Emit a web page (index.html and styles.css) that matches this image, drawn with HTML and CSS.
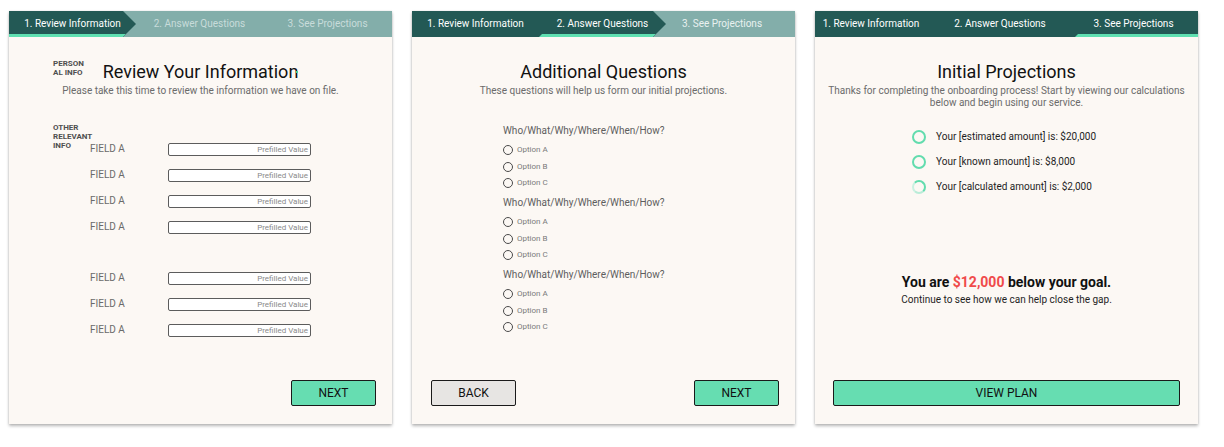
FILE: index.html
```html
<!DOCTYPE html>
<html lang="en">
<head>
<meta charset="utf-8">
<title>Onboarding</title>
<link rel="stylesheet" href="styles.css">
</head>
<body>
<div class="screens">

  <section class="panel">
    <nav class="tabs">
      <div class="tab current first">1. Review Information</div>
      <div class="tab todo dim">2. Answer Questions</div>
      <div class="tab todo dim">3. See Projections</div>
    </nav>
    <div class="panel-body">
      <header class="review-head">
        <div class="side-label">PERSON<br>AL INFO</div>
        <h1 class="title">Review Your Information<span class="cursor-dot"></span></h1>
        <div></div>
      </header>
      <p class="subtitle">Please take this time to review the information we have on file.</p>
      <div class="fields">
        <div class="side-label">OTHER<br>RELEVANT<br>INFO</div>
        <div class="field-groups">
          <div class="field-group">
            <div class="field-row"><span class="field-name">FIELD A</span><div class="field-input">Prefilled Value</div></div>
            <div class="field-row"><span class="field-name">FIELD A</span><div class="field-input">Prefilled Value</div></div>
            <div class="field-row"><span class="field-name">FIELD A</span><div class="field-input">Prefilled Value</div></div>
            <div class="field-row"><span class="field-name">FIELD A</span><div class="field-input">Prefilled Value</div></div>
          </div>
          <div class="field-group">
            <div class="field-row"><span class="field-name">FIELD A</span><div class="field-input">Prefilled Value</div></div>
            <div class="field-row"><span class="field-name">FIELD A</span><div class="field-input">Prefilled Value</div></div>
            <div class="field-row"><span class="field-name">FIELD A</span><div class="field-input">Prefilled Value</div></div>
          </div>
        </div>
      </div>
      <div class="actions actions-end">
        <button class="btn btn-primary">NEXT</button>
      </div>
    </div>
  </section>

  <section class="panel">
    <nav class="tabs">
      <div class="tab done">1. Review Information</div>
      <div class="tab current">2. Answer Questions</div>
      <div class="tab todo p2-tab3">3. See Projections</div>
    </nav>
    <div class="panel-body">
      <h1 class="title">Additional Questions</h1>
      <p class="subtitle">These questions will help us form our initial projections.</p>
      <div class="questions">
        <div class="question">
          <p class="question-text">Who/What/Why/Where/When/How?</p>
          <div class="options">
            <label class="option"><span class="radio"></span>Option A</label>
            <label class="option"><span class="radio"></span>Option B</label>
            <label class="option"><span class="radio"></span>Option C</label>
          </div>
        </div>
        <div class="question">
          <p class="question-text">Who/What/Why/Where/When/How?</p>
          <div class="options">
            <label class="option"><span class="radio"></span>Option A</label>
            <label class="option"><span class="radio"></span>Option B</label>
            <label class="option"><span class="radio"></span>Option C</label>
          </div>
        </div>
        <div class="question">
          <p class="question-text">Who/What/Why/Where/When/How?</p>
          <div class="options">
            <label class="option"><span class="radio"></span>Option A</label>
            <label class="option"><span class="radio"></span>Option B</label>
            <label class="option"><span class="radio"></span>Option C</label>
          </div>
        </div>
      </div>
      <div class="actions actions-between">
        <button class="btn btn-secondary">BACK</button>
        <button class="btn btn-primary">NEXT</button>
      </div>
    </div>
  </section>

  <section class="panel">
    <nav class="tabs">
      <div class="tab done p3-tab1">1. Review Information</div>
      <div class="tab done p3-tab2">2. Answer Questions</div>
      <div class="tab current last">3. See Projections</div>
    </nav>
    <div class="panel-body">
      <h1 class="title">Initial Projections</h1>
      <p class="subtitle">Thanks for completing the onboarding process! Start by viewing our calculations<br>below and begin using our service.</p>
      <ul class="results">
        <li class="result"><span class="ring"></span>Your [estimated amount] is: $20,000</li>
        <li class="result"><span class="ring"></span>Your [known amount] is: $8,000</li>
        <li class="result"><span class="ring ring-loading"></span>Your [calculated amount] is: $2,000</li>
      </ul>
      <p class="goal">You are <span class="goal-gap">$12,000</span> below your goal.</p>
      <p class="goal-note">Continue to see how we can help close the gap.</p>
      <div class="actions actions-full">
        <button class="btn btn-primary btn-block">VIEW PLAN</button>
      </div>
    </div>
  </section>

</div>
</body>
</html>
```
FILE: styles.css
```css
* { box-sizing: border-box; }

html, body {
  margin: 0;
  padding: 0;
  background: #ffffff;
  font-family: Roboto, "Liberation Sans", Arial, sans-serif;
}

.screens {
  display: flex;
  gap: 20px;
  padding: 11px 0 23px 9px;
}

.panel {
  width: 383px;
  height: 413px;
  background: #fcf8f4;
  box-shadow: 0 2px 3px rgba(0, 0, 0, 0.28), 0 0 2px rgba(0, 0, 0, 0.10);
  display: flex;
  flex-direction: column;
}

/* ---------- step tabs ---------- */
.tabs {
  display: grid;
  grid-template-columns: 127px 127px 1fr;
  height: 26px;
  background: #83aeaa;
}

.tab {
  position: relative;
  display: flex;
  align-items: center;
  justify-content: center;
  font-size: 10px;
  line-height: 12px;
  color: #ffffff;
  white-space: nowrap;
}

.tab.todo { color: #e9f1f0; }
.tab.todo.dim { color: #c8dcda; }

.tab.done { background: #235955; }

.tab.current {
  background: #235955;
  clip-path: polygon(0 0, calc(100% - 13px) 0, 100% 50%, calc(100% - 13px) 100%, 0 100%);
}

.tab.current.last { clip-path: none; }

.tab.current::after {
  content: "";
  position: absolute;
  left: 0;
  right: 0;
  bottom: 0;
  height: 3px;
  background: #5fe0b1;
  clip-path: polygon(3px 0, calc(100% - 10px) 0, calc(100% - 13px) 100%, 0 100%);
}

.tab.current.first::after {
  clip-path: polygon(0 0, calc(100% - 10px) 0, calc(100% - 13px) 100%, 0 100%);
}

.tab.current.last::after {
  left: 6px;
  clip-path: polygon(3px 0, 100% 0, 100% 100%, 0 100%);
}

.p2-tab3 { padding-right: 17px; }
.p3-tab1 { padding-right: 15px; }
.p3-tab2 { padding-right: 11px; }

/* ---------- body ---------- */
.panel-body {
  flex: 1;
  display: flex;
  flex-direction: column;
  padding-top: 24px;
}

.title {
  margin: 0;
  font-size: 18px;
  line-height: 22px;
  font-weight: 400;
  color: #121212;
  text-align: center;
}

.cursor-dot {
  display: inline-block;
  width: 2px;
  height: 2px;
  margin-left: -2px;
  vertical-align: 5px;
  background: #3fcf9c;
}

.subtitle {
  margin: 2px 0 0;
  font-size: 10px;
  line-height: 12px;
  color: #6b6b6b;
  text-align: center;
}

.review-head {
  display: grid;
  grid-template-columns: 1fr auto 1fr;
  padding: 0 44px;
}

.side-label {
  font-size: 8px;
  line-height: 9px;
  font-weight: 700;
  color: #4f4f4f;
}

.review-head .side-label { margin-top: -2px; }

/* ---------- fields ---------- */
.fields {
  display: flex;
  margin-top: 26px;
  padding-left: 44px;
}

.fields .side-label { width: 37px; }

.field-groups {
  display: flex;
  flex-direction: column;
  gap: 38px;
  padding-top: 20px;
}

.field-group {
  display: flex;
  flex-direction: column;
  gap: 13px;
}

.field-row {
  display: flex;
  align-items: flex-start;
  height: 13px;
}

.field-name {
  width: 78px;
  font-size: 10px;
  line-height: 12px;
  color: #6a6a6a;
}

.field-input {
  width: 143px;
  height: 13px;
  border: 1px solid #5c5c5c;
  border-radius: 2px;
  background: #ffffff;
  font-size: 8px;
  line-height: 11px;
  color: #8a8a8a;
  text-align: right;
  padding-right: 2px;
}

/* ---------- questions ---------- */
.questions {
  margin-top: 27.5px;
  padding-left: 91px;
  display: flex;
  flex-direction: column;
  gap: 8.5px;
}

.question-text {
  margin: 0 0 8.5px;
  font-size: 10px;
  line-height: 12px;
  color: #5e5e5e;
}

.options {
  display: flex;
  flex-direction: column;
  gap: 6.5px;
}

.option {
  display: flex;
  align-items: center;
  height: 10px;
  font-size: 8px;
  line-height: 10px;
  color: #7a7a7a;
}

.radio {
  width: 10px;
  height: 10px;
  border: 1px solid #4a4a4a;
  border-radius: 50%;
  margin-right: 4px;
  flex: none;
}

/* ---------- results ---------- */
.results {
  list-style: none;
  margin: 20.7px 0 0;
  padding: 0 0 0 97px;
  display: flex;
  flex-direction: column;
  gap: 11px;
}

.result {
  display: flex;
  align-items: center;
  height: 14px;
  font-size: 10px;
  line-height: 14px;
  color: #1e1e1e;
}

.ring {
  width: 14px;
  height: 14px;
  border: 2.5px solid #62dcae;
  border-radius: 50%;
  margin-right: 10px;
  flex: none;
}

.ring-loading {
  border-color: #62dcae #62dcae #b9ecd8 #c9f1e1;
}

.goal {
  margin: 80px 0 0;
  font-size: 14px;
  line-height: 17px;
  font-weight: 700;
  color: #111111;
  text-align: center;
}

.goal-gap { color: #f04a4a; }

.goal-note {
  margin: 3px 0 0;
  font-size: 10px;
  line-height: 12px;
  color: #1e1e1e;
  text-align: center;
}

/* ---------- actions ---------- */
.actions {
  margin-top: auto;
  display: flex;
  padding: 0 16px 18px 19px;
}

.actions-end { justify-content: flex-end; }
.actions-between { justify-content: space-between; }
.actions-full { padding: 0 18px 18px 18px; }

.btn {
  width: 85px;
  height: 26px;
  border: 1px solid #1a1a1a;
  border-radius: 2px;
  font-family: Roboto, "Liberation Sans", Arial, sans-serif;
  font-size: 12px;
  line-height: 24px;
  color: #111111;
  padding: 0;
  cursor: pointer;
}

.btn-primary { background: #66ddb1; }
.btn-secondary { background: #e7e5e3; }
.btn-block { width: 100%; }
```
